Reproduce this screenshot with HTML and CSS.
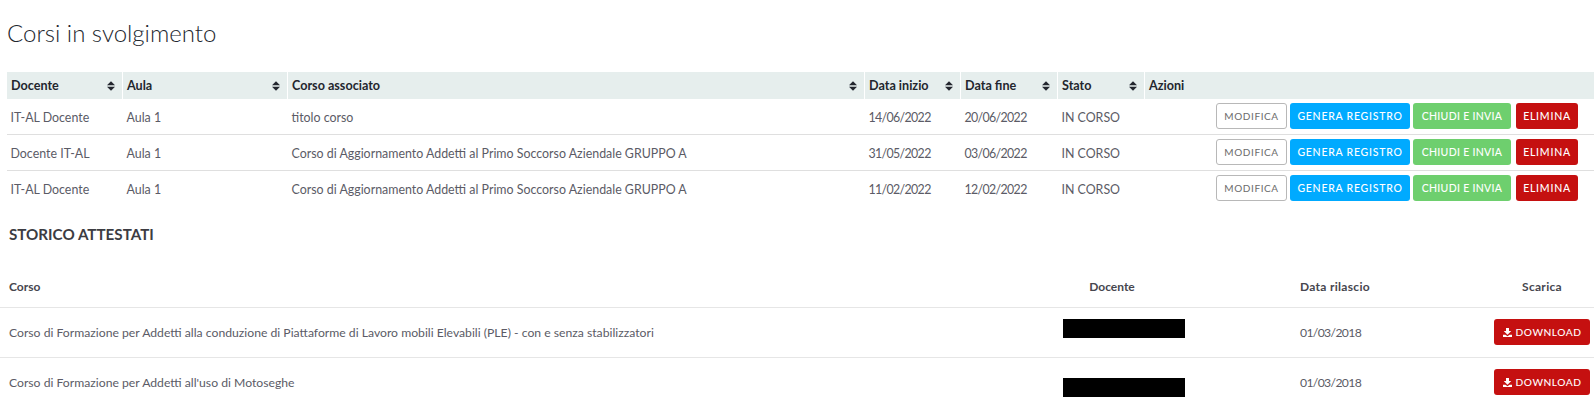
FILE: index.html
```html
<!DOCTYPE html>
<html lang="it">
<head>
<meta charset="utf-8">
<title>Corsi in svolgimento</title>
<link rel="stylesheet" href="styles.css">
</head>
<body>
<svg class="defs" width="0" height="0" aria-hidden="true">
  <symbol id="sort" viewBox="0 0 10 12"><path d="M5 0 10 5H0ZM0 7H10L5 12Z"/></symbol>
  <symbol id="dl" viewBox="0 0 12 12"><path d="M4 0H8V4H11L6 9 1 4H4ZM0 9H3.2L6 11 8.8 9H12V12H0Z"/></symbol>
</svg>
<main class="page">
  <h1 class="title">Corsi in svolgimento</h1>
  <table class="courses">
    <colgroup>
      <col class="c-doc"><col class="c-aula"><col class="c-corso"><col class="c-ini"><col class="c-fine"><col class="c-stato"><col>
    </colgroup>
    <thead>
      <tr>
        <th><span class="th-in">Docente<svg class="sort"><use href="#sort"/></svg></span></th>
        <th><span class="th-in">Aula<svg class="sort"><use href="#sort"/></svg></span></th>
        <th><span class="th-in">Corso associato<svg class="sort"><use href="#sort"/></svg></span></th>
        <th><span class="th-in">Data inizio<svg class="sort"><use href="#sort"/></svg></span></th>
        <th><span class="th-in">Data fine<svg class="sort"><use href="#sort"/></svg></span></th>
        <th><span class="th-in">Stato<svg class="sort"><use href="#sort"/></svg></span></th>
        <th><span class="th-in">Azioni</span></th>
      </tr>
    </thead>
    <tbody>
      <tr>
        <td>IT-AL Docente</td><td>Aula 1</td><td>titolo corso</td><td class="num">14/06/2022</td><td class="num">20/06/2022</td><td>IN CORSO</td>
        <td><div class="actions"><a class="btn b-mod">MODIFICA</a><a class="btn b-gen">GENERA REGISTRO</a><a class="btn b-chi">CHIUDI E INVIA</a><a class="btn b-del">ELIMINA</a></div></td>
      </tr>
      <tr>
        <td>Docente IT-AL</td><td>Aula 1</td><td>Corso di Aggiornamento Addetti al Primo Soccorso Aziendale GRUPPO A</td><td class="num">31/05/2022</td><td class="num">03/06/2022</td><td>IN CORSO</td>
        <td><div class="actions"><a class="btn b-mod">MODIFICA</a><a class="btn b-gen">GENERA REGISTRO</a><a class="btn b-chi">CHIUDI E INVIA</a><a class="btn b-del">ELIMINA</a></div></td>
      </tr>
      <tr>
        <td>IT-AL Docente</td><td>Aula 1</td><td>Corso di Aggiornamento Addetti al Primo Soccorso Aziendale GRUPPO A</td><td class="num">11/02/2022</td><td class="num">12/02/2022</td><td>IN CORSO</td>
        <td><div class="actions"><a class="btn b-mod">MODIFICA</a><a class="btn b-gen">GENERA REGISTRO</a><a class="btn b-chi">CHIUDI E INVIA</a><a class="btn b-del">ELIMINA</a></div></td>
      </tr>
    </tbody>
  </table>
  <h2 class="subtitle">STORICO ATTESTATI</h2>
  <table class="history">
    <colgroup><col><col class="h-doc"><col class="h-data"><col class="h-dl"></colgroup>
    <thead>
      <tr><th>Corso</th><th class="center">Docente</th><th class="date wide">Data rilascio</th><th class="center wide">Scarica</th></tr>
    </thead>
    <tbody>
      <tr>
        <td>Corso di Formazione per Addetti alla conduzione di Piattaforme di Lavoro mobili Elevabili (PLE) - con e senza stabilizzatori</td>
        <td class="who"><div class="redact"></div></td>
        <td class="date num">01/03/2018</td>
        <td class="center"><a class="btn b-del b-dl"><svg class="dl-ic"><use href="#dl"/></svg>DOWNLOAD</a></td>
      </tr>
      <tr>
        <td>Corso di Formazione per Addetti all'uso di Motoseghe</td>
        <td class="who"><div class="redact low"></div></td>
        <td class="date num">01/03/2018</td>
        <td class="center"><a class="btn b-del b-dl"><svg class="dl-ic"><use href="#dl"/></svg>DOWNLOAD</a></td>
      </tr>
    </tbody>
  </table>
</main>
</body>
</html>
```
FILE: styles.css
```css
* { box-sizing: border-box; }
html, body { margin: 0; padding: 0; background: #fff; }
body { font-family: "Lato", "Liberation Sans", sans-serif; color: #5b5b66; overflow: hidden; }
.defs { position: absolute; }
.page { display: flex; flex-direction: column; height: 406px; overflow: hidden; }
.title { margin: 17px 0 0 7px; font-size: 24px; line-height: 32px; font-weight: 300; color: #22262e; }
table { border-collapse: collapse; table-layout: fixed; }
.courses { margin: 23px 0 0 6px; width: 1588px; font-size: 12.4px; }
.c-doc { width: 116px; } .c-aula { width: 165px; } .c-corso { width: 577px; }
.c-ini { width: 96px; } .c-fine { width: 97px; } .c-stato { width: 87px; }
.courses th { height: 27px; padding: 0; background: #e6eeed; border-left: 1px solid #fff; border-right: 1px solid #fff; font-weight: 700; color: #23262e; text-align: left; font-size: 12.6px; }
.courses th:last-child { border-right: 0; }
.th-in { display: flex; align-items: center; justify-content: space-between; padding: 0 7px 0 4px; }
.sort { width: 8px; height: 10px; fill: #23262e; }
.courses td { height: 36px; padding: 2px 0 0 4px; border-bottom: 1px solid #dfdfdf; white-space: nowrap; }
.courses tbody tr:first-child td { height: 35px; }
.courses tr:last-child td { border-bottom: 0; }
.num { letter-spacing: -.65px; }
.actions { display: flex; justify-content: flex-end; gap: 3px; padding-right: 16px; margin-top: -2px; }
.btn { display: inline-flex; align-items: center; justify-content: center; height: 26px; border-radius: 3px; font-size: 10.5px; font-weight: 500; letter-spacing: .75px; color: #fff; white-space: nowrap; }
.b-mod { width: 71px; background: #fff; border: 1px solid #b8b8b8; color: #6b6b6b; font-weight: 400; font-size: 10px; letter-spacing: .6px; }
.b-gen { width: 120px; background: #00aaff; }
.b-chi { width: 98px; background: #6ecf6e; margin-right: 2px; letter-spacing: .3px; }
.b-del { width: 62px; background: #c51010; }
.subtitle { margin: 19px 0 0 9px; font-size: 15.2px; line-height: 18px; font-weight: 700; color: #3c3c42; }
.history { margin: 23px 0 0 0; width: 1594px; font-size: 12.2px; }
.h-doc { width: 144px; } .h-data { width: 306px; } .h-dl { width: 104px; }
.history th { height: 41px; padding: 0 0 0 9px; text-align: left; font-weight: 700; color: #46464e; border-bottom: 1px solid #e6e6e6; font-size: 12px; }
.history td { height: 50px; padding: 0 0 0 9px; border-bottom: 1px solid #e6e6e6; white-space: nowrap; }
.history tr:last-child td { border-bottom: 0; }
.history th.center, .history td.center { text-align: center; padding: 0; }
.history th.date, .history td.date { padding-left: 116px; }
.history th.wide { letter-spacing: .3px; }
.history td.who { padding: 0; }
.redact { width: 122px; height: 19px; margin: -8px 0 0 23px; background: #000; }
.redact.low { margin-top: 10px; }
.b-dl { width: 96px; background: #c51010; gap: 4px; font-size: 10.2px; letter-spacing: .5px; }
.dl-ic { width: 9px; height: 9px; fill: #fff; }
```
